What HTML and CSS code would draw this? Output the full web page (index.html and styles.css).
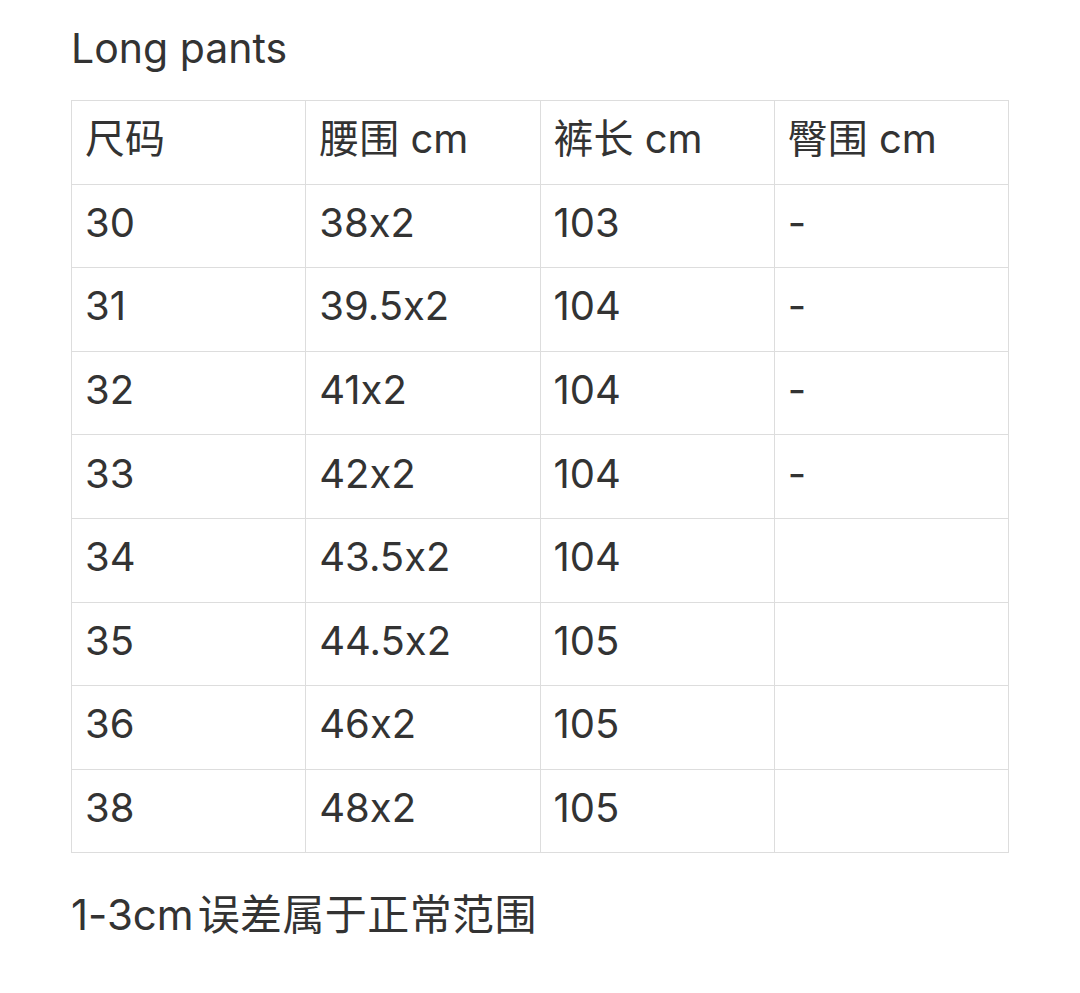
FILE: index.html
```html
<!DOCTYPE html>
<html lang="zh">
<head>
<meta charset="utf-8">
<title>Long pants</title>
<link rel="stylesheet" href="styles.css">
</head>
<body>
<div class="page">
  <h1 class="title">Long pants</h1>
  <table class="size-table">
    <tr><td>尺码</td><td>腰围 cm</td><td>裤长 cm</td><td>臀围 cm</td></tr>
    <tr><td>30</td><td>38x2</td><td>103</td><td>-</td></tr>
    <tr><td>31</td><td>39.5x2</td><td>104</td><td>-</td></tr>
    <tr><td>32</td><td>41x2</td><td>104</td><td>-</td></tr>
    <tr><td>33</td><td>42x2</td><td>104</td><td>-</td></tr>
    <tr><td>34</td><td>43.5x2</td><td>104</td><td></td></tr>
    <tr><td>35</td><td>44.5x2</td><td>105</td><td></td></tr>
    <tr><td>36</td><td>46x2</td><td>105</td><td></td></tr>
    <tr><td>38</td><td>48x2</td><td>105</td><td></td></tr>
  </table>
  <p class="note">1-3cm<span class="note-cjk">误差属于正常范围</span></p>
</div>
</body>
</html>
```

FILE: styles.css
```css
html, body {
  margin: 0;
  padding: 0;
  background: #ffffff;
}

.page {
  padding: 24px 71px 0 71px;
  font-family: Inter, "Noto Sans CJK SC", sans-serif;
  font-feature-settings: "calt" 0;
  color: #333333;
  font-size: 40px;
  line-height: 48px;
}

.title {
  margin: 0 0 28px 0;
  font-size: 41px;
  font-weight: 400;
  line-height: 48px;
}

.size-table {
  width: 938px;
  border-collapse: collapse;
  table-layout: fixed;
}

.size-table tr {
  height: 83.6px;
}

.size-table td {
  border: 1px solid #dddddd;
  padding: 0 13px 6px 13px;
  vertical-align: middle;
  font-size: 40px;
  line-height: 48px;
  white-space: nowrap;
}

.note {
  margin: 38px 0 0 0;
  font-size: 42px;
  line-height: 48px;
}

.note-cjk {
  margin-left: 4px;
  letter-spacing: 0.4px;
}
```
